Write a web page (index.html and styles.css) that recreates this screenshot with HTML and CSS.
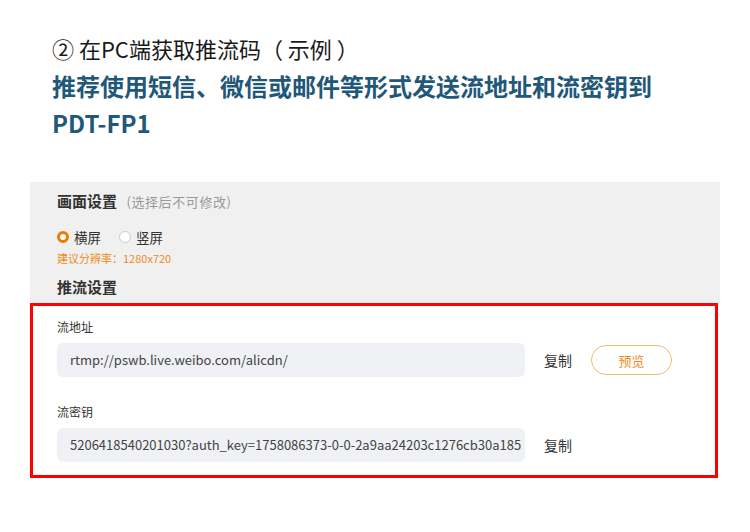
FILE: index.html
```html
<!DOCTYPE html>
<html lang="zh">
<head>
<meta charset="utf-8">
<link rel="stylesheet" href="styles.css">
</head>
<body>
<div class="page">
  <div class="header">
    <div class="step">② 在PC端获取推流码（ 示例 ）</div>
    <div class="note">推荐使用短信、微信或邮件等形式发送流地址和流密钥到</div>
    <div class="note">PDT-FP1</div>
  </div>
  <div class="panel">
    <div class="sec-title">画面设置 <span class="sub">(选择后不可修改)</span></div>
    <div class="radios">
      <span class="radio on"></span><span class="rlabel">横屏</span>
      <span class="radio"></span><span class="rlabel">竖屏</span>
    </div>
    <div class="hint">建议分辨率：1280x720</div>
    <div class="sec-title push">推流设置</div>
  </div>
  <div class="box">
    <div class="label">流地址</div>
    <div class="row">
      <div class="input">rtmp://pswb.live.weibo.com/alicdn/</div>
      <span class="copy">复制</span>
      <span class="preview">预览</span>
    </div>
    <div class="label second">流密钥</div>
    <div class="row">
      <div class="input">5206418540201030?auth_key=1758086373-0-0-2a9aa24203c1276cb30a185</div>
      <span class="copy">复制</span>
    </div>
  </div>
</div>
</body>
</html>
```
FILE: styles.css
```css
html, body {
  margin: 0;
  padding: 0;
  background: #ffffff;
}
body {
  font-family: "Noto Sans CJK SC", "Noto Sans", sans-serif;
  color: #222;
}
.page {
  width: 750px;
  height: 532px;
  overflow: hidden;
}
.header {
  padding: 30px 0 0 52px;
  height: 182px;
  box-sizing: border-box;
}
.step {
  font-size: 22px;
  line-height: 37px;
  color: #1a1a1a;
}
.note {
  font-size: 24px;
  line-height: 37px;
  font-weight: 700;
  color: #1f5878;
}
.panel {
  margin-left: 30px;
  width: 690px;
  height: 121px;
  background: #f0f0f0;
  padding: 9px 0 0 27px;
  box-sizing: border-box;
}
.sec-title {
  font-size: 15px;
  line-height: 20px;
  font-weight: 700;
  color: #333;
}
.sub {
  font-weight: 400;
  font-size: 13px;
  color: #999;
  margin-left: 6px;
  letter-spacing: 0.6px;
}
.radios {
  display: flex;
  align-items: center;
  margin-top: 16px;
  height: 18px;
}
.radio {
  width: 12px;
  height: 12px;
  border-radius: 50%;
  border: 1px solid #ccc;
  background: #fff;
  box-sizing: border-box;
}
.radio.on {
  border: 3px solid #f07a00;
}
.rlabel {
  font-size: 13.5px;
  color: #333;
  margin-left: 5px;
  margin-right: 18px;
}
.hint {
  font-size: 11px;
  line-height: 16px;
  color: #f08a1c;
  margin-top: 4px;
}
.push {
  margin-top: 11px;
}
.box {
  margin-left: 30px;
  width: 688px;
  height: 175px;
  border: 3px solid #ff0000;
  box-sizing: border-box;
  padding: 12px 0 0 24px;
}
.label {
  font-size: 12px;
  line-height: 18px;
  color: #333;
}
.label.second {
  margin-top: 26px;
}
.row {
  display: flex;
  align-items: center;
  margin-top: 7px;
}
.input {
  width: 468px;
  height: 34px;
  line-height: 34px;
  background: #f0f1f4;
  border-radius: 6px;
  padding: 0 0 0 13px;
  box-sizing: border-box;
  font-size: 13px;
  color: #444;
  white-space: nowrap;
  overflow: hidden;
}
.copy {
  font-size: 14px;
  color: #333;
  margin-left: 19px;
}
.preview {
  margin-left: 19px;
  width: 81px;
  height: 30px;
  border: 1px solid #f8b870;
  border-radius: 15px;
  box-sizing: border-box;
  display: flex;
  align-items: center;
  justify-content: center;
  font-size: 13px;
  color: #f08c1f;
}
```
